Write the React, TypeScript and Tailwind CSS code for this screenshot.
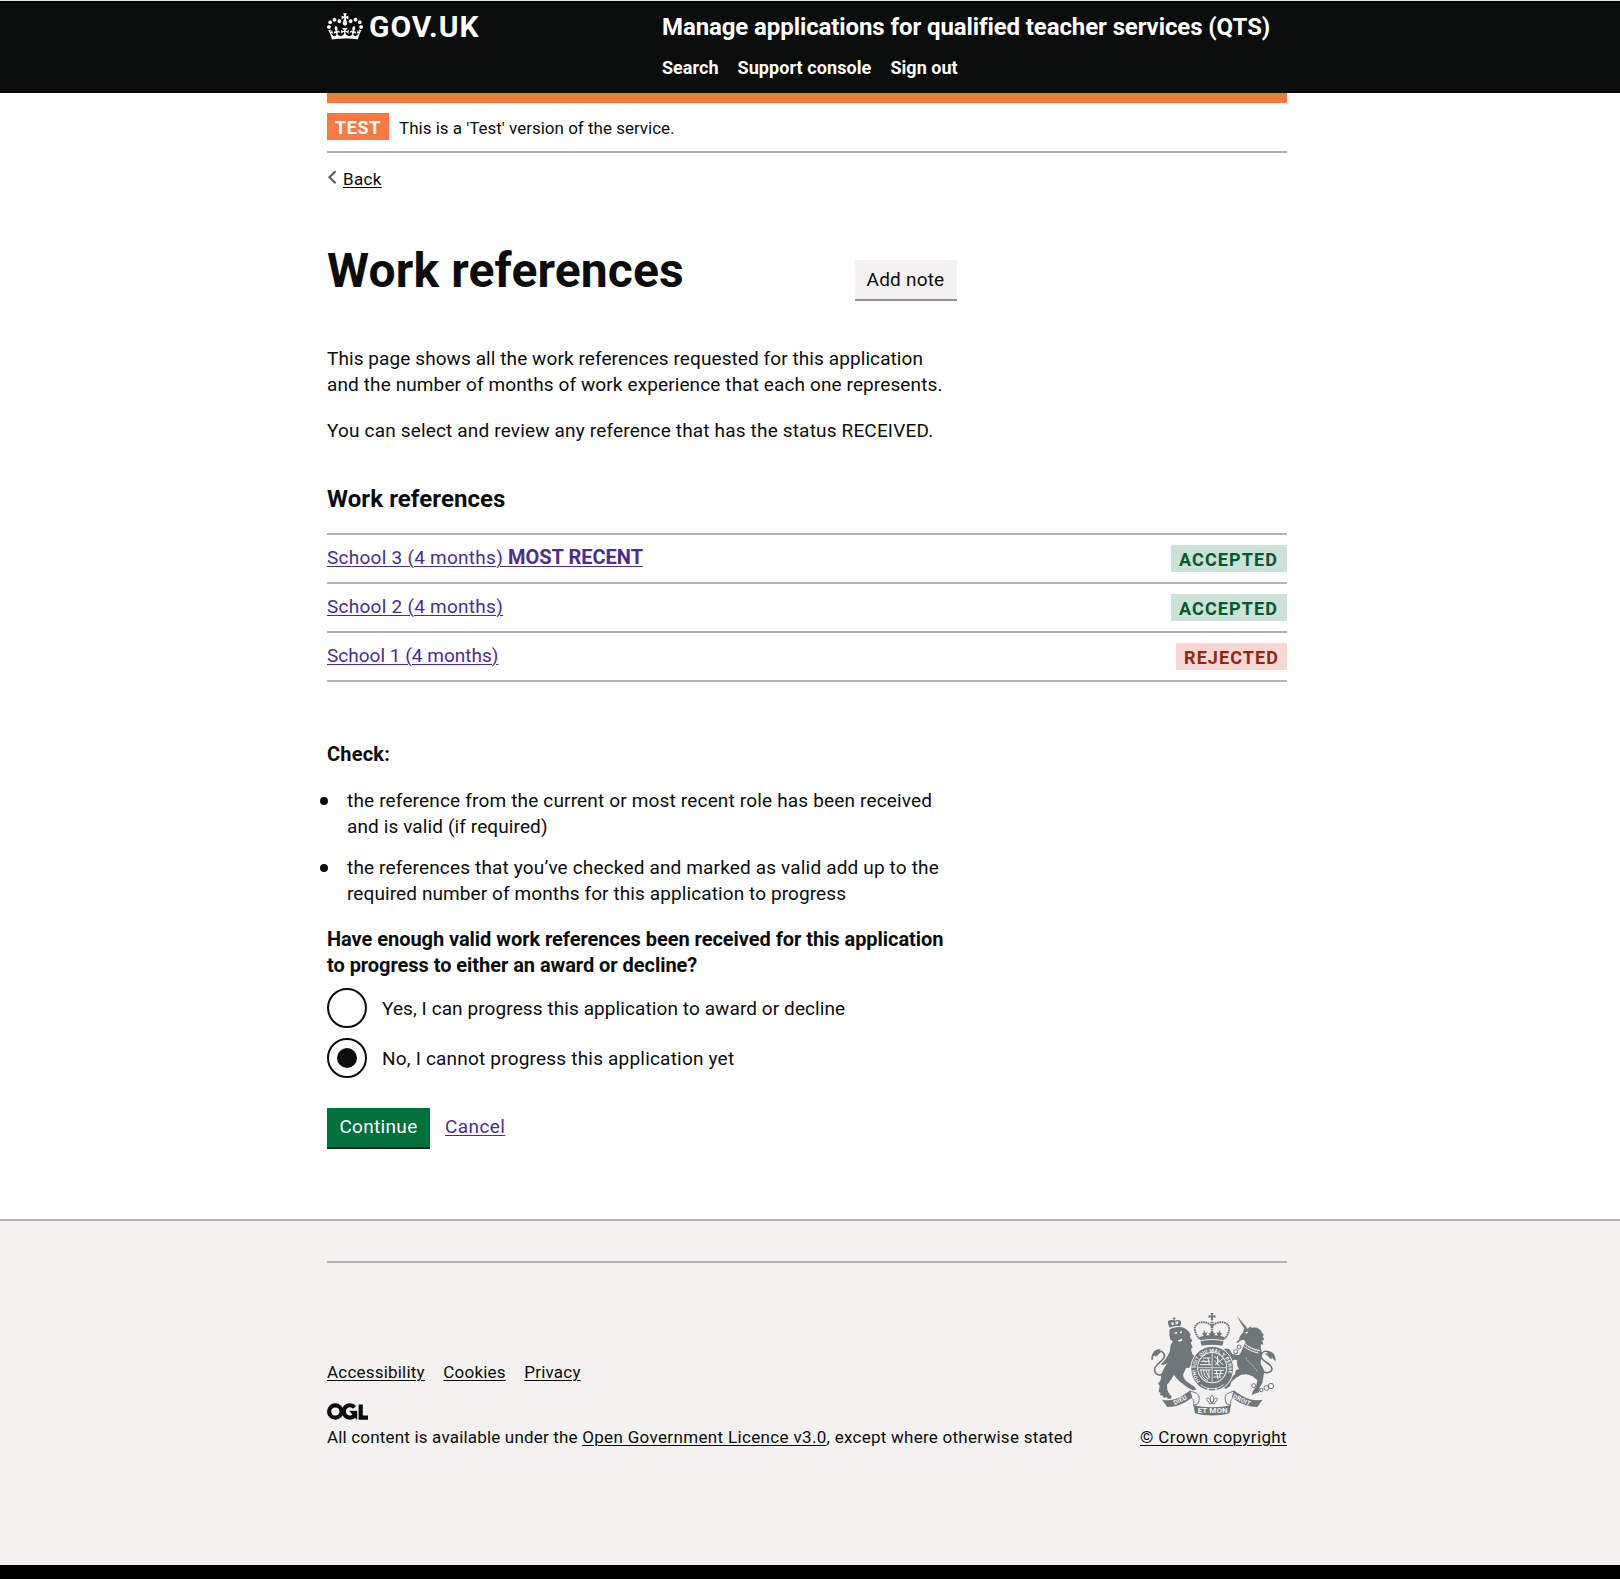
import type { ReactNode } from "react";

const CROWN =
  "M25 30.2c3.5 1.5 7.7-.2 9.1-3.7 1.5-3.6-.2-7.8-3.9-9.2-3.6-1.4-7.6.3-9.1 3.9-1.4 3.5.3 7.5 3.9 9zM9 39.5c3.6 1.5 7.8-.2 9.2-3.7 1.5-3.6-.2-7.8-3.9-9.1-3.6-1.5-7.6.2-9.1 3.8-1.4 3.5.3 7.5 3.8 9zM4.4 57.2c3.5 1.5 7.7-.2 9.1-3.8 1.5-3.6-.2-7.7-3.9-9.1-3.5-1.5-7.6.3-9.1 3.8-1.4 3.5.3 7.6 3.9 9.1zm38.3-21.4c3.5 1.5 7.7-.2 9.1-3.8 1.5-3.6-.2-7.7-3.9-9.1-3.6-1.5-7.6.3-9.1 3.8-1.3 3.6.4 7.7 3.9 9.1zm64.4-5.6c-3.6 1.5-7.8-.2-9.1-3.7-1.5-3.6.2-7.8 3.8-9.2 3.6-1.4 7.7.3 9.2 3.9 1.3 3.5-.4 7.5-3.9 9zm15.9 9.3c-3.6 1.5-7.7-.2-9.1-3.7-1.5-3.6.2-7.8 3.7-9.1 3.6-1.5 7.7.2 9.2 3.8 1.5 3.5-.3 7.5-3.8 9zm4.7 17.7c-3.6 1.5-7.8-.2-9.2-3.8-1.5-3.6.2-7.7 3.9-9.1 3.6-1.5 7.7.3 9.2 3.8 1.3 3.5-.4 7.6-3.9 9.1zM89.3 35.8c-3.6 1.5-7.8-.2-9.2-3.8-1.4-3.6.2-7.7 3.9-9.1 3.6-1.5 7.7.3 9.2 3.8 1.4 3.6-.3 7.7-3.9 9.1zM69.7 17.7l8.9 4.7V9.3l-8.9 2.8c-.2-.3-.5-.6-.9-.9L72.4 0H59.6l3.5 11.2c-.3.3-.6.5-.9.9l-8.8-2.8v13.1l8.8-4.7c.3.3.6.7.9.9l-5 15.4v.1c-.2.8-.4 1.6-.4 2.4 0 4.1 3.1 7.5 7 8.1h.2c.3 0 .7.1 1 .1.4 0 .7 0 1-.1h.2c4-.6 7.1-4.1 7.1-8.1 0-.8-.1-1.7-.4-2.4V34l-5.1-15.4c.4-.2.7-.6 1-.9zM66 92.8c16.9 0 32.8 1.1 47.1 3.2 4-16.9 8.9-26.7 14-33.5l-9.6-3.4c1 4.9 1.1 7.2 0 10.2-1.5-1.4-3-4.3-4.2-8.7L108.6 76c2.8-2 5-3.2 7.5-3.3-4.4 9.4-10 11.9-13.6 11.2-4.3-.8-6.3-4.6-5.6-7.9 1-4.7 5.7-5.9 8-.5 4.3-8.7-3-11.4-7.6-8.8 7.1-7.2 7.9-13.5 2.1-21.1-8 6.1-8.1 12.3-4.5 20.8-4.7-5.4-12.1-2.5-9.5 6.2 3.4-5.2 7.9-2 7.2 3.1-.6 4.3-6.4 7.8-13.5 7.2-10.3-.9-10.9-8-11.2-13.8 2.5-.5 7.1 1.8 11 7.3L80.2 60c-4.1 4.4-8 5.3-12.3 5.4 1.4-4.4 8-11.6 8-11.6H55.5s6.4 7.2 7.9 11.6c-4.2-.1-8-1-12.3-5.4l1.4 16.4c3.9-5.5 8.5-7.7 10.9-7.3-.3 5.8-.9 12.8-11.1 13.8-7.2.6-12.9-2.9-13.5-7.2-.7-5 3.8-8.3 7.1-3.1 2.7-8.7-4.6-11.6-9.4-6.2 3.7-8.5 3.6-14.7-4.6-20.8-5.8 7.6-5 13.9 2.2 21.1-4.7-2.6-11.9.1-7.7 8.8 2.3-5.5 7.1-4.2 8.1.5.7 3.3-1.3 7.1-5.7 7.9-3.5.7-9-1.8-13.5-11.2 2.5.1 4.7 1.3 7.5 3.3l-4.7-15.4c-1.2 4.4-2.7 7.2-4.3 8.7-1.1-3-.9-5.3 0-10.2l-9.5 3.4c5 6.9 9.9 16.7 14 33.5 14.8-2.1 30.8-3.2 47.7-3.2z";

function OglLogo() {
  return (
    <svg className="mt-[21px] block" width="41" height="17" viewBox="0 0 41 17" fill="none" stroke="#0b0c0c">
      <circle cx="8.3" cy="8.5" r="6.2" strokeWidth="4.2" />
      <path d="M27.6 4.4 A6.2 6.2 0 1 0 27.8 12.3" strokeWidth="4.2" />
      <path d="M22.6 8.1 H30 V16.3 H29.6 L22.6 8.1z" fill="#0b0c0c" strokeWidth="0.4" />
      <path d="M33.7 1.4 V14.7 H41" strokeWidth="4.2" />
    </svg>
  );
}

/* Royal coat of arms: lion, crowned garter and unicorn over a motto ribbon. */
function RoyalArms() {
  return (
    <svg
      className="mr-[11px] block self-end"
      width="125"
      height="103"
      viewBox="93 68 375 309"
      fill="#6f777b"
      fontFamily="Roboto, sans-serif"
      fontWeight="700"
    >
      {/* central crown */}
      <path d="M272 68h8l-2 8 8-2v9l-8-2 2 9h-8l2-9-8 2v-9l8 2z" />
      <g fill="none" stroke="#6f777b">
        <path d="M239 146C222 128 218 104 238 97 254 92 270 100 276 108 282 100 298 92 314 97 334 104 330 128 313 146" strokeWidth="6" strokeDasharray="5 2" />
        <path d="M276 94V142" strokeWidth="8" strokeDasharray="5 2" />
      </g>
      <path d="M238 140c26-7 50-7 76 0l-3 10c-24-5-46-5-70 0z" />
      <path d="M252 120l5 8 6-2-4 8 5 8h-16l3-8-6-3 5-3zM300 120l-5 8-6-2 4 8-5 8h16l-3-8 6-3-5-3zM276 122l5 7 6-1-4 7 3 7h-20l3-7-4-7 6 1z" />
      <path d="M241 153c23-5 47-5 70 0l-4 13c-20-4-42-4-62 0z" />

      {/* lion */}
      <path
        fillRule="evenodd"
        d="M150 112c-6-8-8-16-5-20 4-4 9-4 13-2l3-4-3-2 2-3 4 1 3 1-1 3-3 1 2 4c6-3 13-3 17 1 3 5 1 11-2 16-9-2-20-1-30 4zM153 98l3 7 6-2-2-8zM166 94l1 8 7-1 1-8z"
      />
      <path d="M149 117c8-5 25-9 37-6 11 2 20 11 26 21l-2 8 7 11-5 6 6 14-5 6 4 14 9 10 2 9-8-5 4 12-5 1 1 13-7-7-6 9-8-1-9 18c-2 10 4 18 14 26l12 9c7 3 12 8 12 14l-9 1-15-8-16-12c-11-8-20-16-25-26l-5 5c-4 10-12 18-17 24l1 15c3 9 7 14 13 20l-2 7h-10l-4-5-7 3-4-7-8-2 2-6-6-4 3-18-5-6 8-11 2-18c5-13 11-22 18-32l-10 4-10 1c6-8 12-13 17-21l10-18 3-22 7-10-8-5-3-14z" />
      <path d="M162 127l8-2 3 3-6 3zM179 125l7-3-1 6-5 1zM172 149c6 1 10-1 13-5l2 6-8 5z" fill="#f3f2f1" />
      <path d="M136 249C108 264 95 240 111 224 123 212 140 202 131 189 124 179 112 180 108 190" fill="none" stroke="#6f777b" strokeWidth="5" />
      <path d="M94 209c0-20 8-32 28-34l-6 7 13-1c-10 6-15 14-23 19l-1-6-6 6 1 7z" />

      {/* unicorn */}
      <path d="M350 76l30 35-7 4z" />
      <path d="M357 148l2-9 10-13 3-9 8-6 3 5 8-8 4 5c14-4 27 3 31 14l6 7-4 3 5 11-6 2 3 13-7-1-1 12 5 17-3 14c-4 10-2 18 4 26l5 12-3 17-3 18-8 13-2 15c-8 2-14 6-22 8l4-12 9-12 4-20-14-12-18-6-16 1-16 9-14 13-4 13-14 8-5-6 8-13 14-15 12-10 3-12 9-4c-6-10-7-17-5-27l-11-1-9 10-8-1-8 7c-1-7 4-12 10-16l-8-11-1-16-8 2c2-9 12-11 19-6l9 14 21 4 6-12 5-12 8-16-6-7-11 3-6 6-6-1z" />
      <path d="M377 127l6-2-2 4zM374 160c13 11 29 18 46 21M371 168c12 10 26 16 44 20" fill="none" stroke="#f3f2f1" strokeWidth="3" />
      <path d="M378 169l36 14" stroke="#f3f2f1" strokeWidth="3" strokeDasharray="3 4" />
      <path d="M417 238C447 259 468 238 448 223 432 211 415 200 426 188 436 178 450 184 452 194" fill="none" stroke="#6f777b" strokeWidth="5" />
      <path d="M467 213c0-20-7-31-29-31l7 7-13 1c12 4 14 11 22 17l2-6 4 6z" />
      <g fill="none" stroke="#6f777b" strokeWidth="3">
        <circle cx="401" cy="286" r="6" />
        <circle cx="411" cy="300" r="6" />
        <circle cx="439" cy="293" r="7" />
        <circle cx="453" cy="287" r="8" />
        <circle cx="424" cy="299" r="5" />
        <circle cx="357" cy="170" r="6" />
        <circle cx="347" cy="184" r="6" />
      </g>
      <path d="M378 202c6 14 22 20 34 42" fill="none" stroke="#f3f2f1" strokeWidth="2" strokeDasharray="4 3" />

      {/* garter and shield */}
      <ellipse cx="276.5" cy="235" rx="64" ry="67" stroke="#f3f2f1" strokeWidth="3" />
      <ellipse cx="276.5" cy="232" rx="45" ry="47" fill="#f3f2f1" />
      <ellipse cx="276.5" cy="232" rx="42" ry="44" />
      <path d="M276.5 189V276M235 232H318" stroke="#f3f2f1" strokeWidth="3" />
      <path d="M276.5 189V276M235 232H318" stroke="#6f777b" strokeWidth="1" />
      <g fill="none" stroke="#f3f2f1" strokeWidth="3" strokeLinecap="round">
        <path d="M250 203h20M244 213h26M241 223h30M251 209l6 7M264 204l5 20" />
        <path d="M283 240h28M283 250h26M282 260h20M289 242l5 24M303 240l-5 20" />
        <path d="M284 198l25 25M284 212l14 14M308 205l-22 18M293 198v26" />
        <path d="M243 239c0 16 6 26 20 31M251 239c0 14 4 20 14 27M259 239c0 10 4 16 10 22M267 239v24M241 239h29" />
      </g>
      <path id="garter" d="M240 273A49.500 52 0 1 1 313 273" fill="none" />
      <text fill="#f3f2f1" fontSize="15">
        <textPath href="#garter">HONI SOIT QUI MAL Y PENSE</textPath>
      </text>
      <path d="M242 283c20 16 50 16 69 0" fill="none" stroke="#f3f2f1" strokeWidth="2.5" />
      <circle cx="264" cy="296" r="3" fill="#f3f2f1" />
      <circle cx="288" cy="296" r="3" fill="#f3f2f1" />

      {/* motto ribbon */}
      <g fill="#f3f2f1" stroke="#6f777b" strokeWidth="3">
        <path d="M211 302l14 5c14 5 16 16 8 34l-12 4c2-14-2-24-16-25z" />
        <path d="M342 302l-14 5c-14 5-16 16-8 34l12 4c-2-14 2-24 16-25z" />
      </g>
      <path d="M126 328c32 8 60-8 84-28l7 20c-20 18-42 29-75 30z" />
      <path d="M428 328c-32 8-62-8-86-28l-7 20c20 18 44 29 77 30z" />
      <path d="M220 344c35 9 78 9 113 0l-5 25c-32 9-71 9-103 0z" />
      <g fill="none" stroke="#6f777b" strokeWidth="3">
        <path d="M276 314c-7 9-7 14 0 24 7-10 7-15 0-24zM268 336c-10-2-10-14-3-13 5 1 5 7 8 13M284 336c10-2 10-14 3-13-5 1-5 7-8 13M266 340h20" />
      </g>
      <g fill="#f3f2f1">
        <text x="233" y="369" fontSize="24">ET MON</text>
        <text x="164" y="344" fontSize="19" transform="rotate(-25 164 344)">DIEU</text>
        <text x="337" y="323" fontSize="19" transform="rotate(25 337 323)">DROIT</text>
      </g>
    </svg>
  );
}

function Tag({ tone, children }: { tone: "green" | "red"; children: ReactNode }) {
  const colours = tone === "green" ? "bg-[#cce2d8] text-[#005a30] w-[116px]" : "bg-[#f6d7d2] text-[#942514] w-[111px]";
  return (
    <strong className={`mt-[10px] h-[27px] pl-2 pt-px text-[18px] font-bold leading-[27px] tracking-[1.1px] ${colours}`}>
      {children}
    </strong>
  );
}

const references = [
  { school: "School 3 (4 months)", tracking: "tracking-[0.26px]", recent: true, status: "ACCEPTED", tone: "green" as const },
  { school: "School 2 (4 months)", tracking: "tracking-[0.26px]", recent: false, status: "ACCEPTED", tone: "green" as const },
  { school: "School 1 (4 months)", tracking: "tracking-[0.02px]", recent: false, status: "REJECTED", tone: "red" as const },
];

const footerLink = "underline decoration-1 underline-offset-[2px]";

export default function App() {
  return (
    <div className="min-h-[1579px] w-full bg-white font-['Roboto',sans-serif] text-[19px] leading-[26px] text-[#0b0c0c]">
      <header className="h-[93px] border-t border-[#dfe5e2] bg-[#0b0c0c] text-white">
        <div className="h-0.5 bg-black" />
        <div className="ml-[327px] flex w-[960px] pt-[9px]">
          <a href="#" className="flex w-[335px] items-start">
            <svg className="mt-px" width="36" height="27" viewBox="0 0 132 97" fill="currentColor">
              <path fillRule="evenodd" d={CROWN} />
            </svg>
            <span className="ml-[6px] text-[30px] font-bold leading-[30px] tracking-[0.95px]">GOV.UK</span>
          </a>
          <div>
            <a href="#" className="block whitespace-nowrap text-[24px] font-bold leading-[30px] tracking-[-0.1px]">
              Manage applications for qualified teacher services (QTS)
            </a>
            <nav className="mt-[14px] flex gap-[19px] text-[18px] font-bold leading-6 tracking-[0.03px]">
              <a href="#">Search</a>
              <a href="#" className="tracking-[0.08px]">Support console</a>
              <a href="#">Sign out</a>
            </nav>
          </div>
        </div>
      </header>

      <main className="ml-[327px] w-[960px]">
        <div className="flex h-[60px] border-b-2 border-t-[10px] border-b-[#b1b4b6] border-t-[#f77a42] pt-[10px]">
          <strong className="h-[27px] w-[62px] bg-[#f77a42] pl-2 pt-px text-[18px] font-bold leading-[27px] tracking-[0.6px] text-white">
            TEST
          </strong>
          <span className="ml-[10px] pt-[2px] text-[17px] leading-[27px]">This is a 'Test' version of the service.</span>
        </div>

        <a href="#" className="mt-4 flex w-fit text-[17px] leading-5 tracking-[0.35px]">
          <svg className="mt-px" width="16" height="14" viewBox="0 0 16 14" fill="none" stroke="#505a5f" strokeWidth="2">
            <path d="M8.600 1.200 L2.400 7.200 L8.600 13.200" />
          </svg>
          <span className="underline decoration-1 underline-offset-[2px]">Back</span>
        </a>

        <div className="mt-14 flex h-14 w-[630px] justify-between">
          <h1 className="mt-px text-[48px] font-bold leading-[50px] tracking-[0.15px]">Work references</h1>
          <button className="mt-[15px] h-[41px] w-[102px] border-b-2 border-[#929191] bg-[#f3f2f1] pr-px text-[19px] leading-[26px] tracking-[0.2px]">
            Add note
          </button>
        </div>

        <p className="mt-[45px] whitespace-nowrap">
          <span className="tracking-[0.085px]">This page shows all the work references requested for this application</span>
          <br />
          <span className="tracking-[0.115px]">and the number of months of work experience that each one represents.</span>
        </p>
        <p className="mt-5 tracking-[0.17px]">
          You can select and review any reference that has the status RECEIVED.
        </p>

        <h2 className="mt-10 text-[24px] font-bold leading-[30px] tracking-[0.08px]">Work references</h2>

        <ul className="mt-[19px] border-b-2 border-[#b1b4b6]">
          {references.map((r) => (
            <li key={r.school} className="flex h-[49px] justify-between border-t-2 border-[#b1b4b6]">
              <a href="#" className={`mt-[10px] h-[26px] text-[#4c2c92] underline decoration-1 underline-offset-[2px] ${r.tracking}`}>
                {r.school}
                {r.recent && <strong className="text-[20px] font-bold leading-none tracking-[0px]"> MOST RECENT</strong>}
              </a>
              <Tag tone={r.tone}>{r.status}</Tag>
            </li>
          ))}
        </ul>

        <p className="mt-[59px] text-[20px] font-bold tracking-[0.2px]">Check:</p>
        <ul className="mt-[21px] flex flex-col gap-[15px] whitespace-nowrap">
          <li className="flex">
            <span className="-ml-[7px] mt-[9px] mr-[19px] h-2 w-2 rounded-full bg-[#0b0c0c]" />
            <span>
              <span className="tracking-[0.17px]">the reference from the current or most recent role has been received</span>
              <br />
              <span className="tracking-[0.11px]">and is valid (if required)</span>
            </span>
          </li>
          <li className="flex">
            <span className="-ml-[7px] mt-[9px] mr-[19px] h-2 w-2 rounded-full bg-[#0b0c0c]" />
            <span>
              <span className="tracking-[0.16px]">the references that you’ve checked and marked as valid add up to the</span>
              <br />
              <span className="tracking-[0.1px]">required number of months for this application to progress</span>
            </span>
          </li>
        </ul>

        <fieldset>
          <legend className="pt-[19px] text-[20px] font-bold tracking-[-0.045px]">
            Have enough valid work references been received for this application
            <br />
            to progress to either an award or decline?
          </legend>
          <div className="mt-[10px] flex flex-col gap-[10px]">
            <label className="flex h-10">
              <span className="h-10 w-10 rounded-full border-2 border-[#0b0c0c]" />
              <span className="ml-[15px] mt-[8px] tracking-[0.09px]">Yes, I can progress this application to award or decline</span>
            </label>
            <label className="flex h-10">
              <span className="flex h-10 w-10 items-center justify-center rounded-full border-2 border-[#0b0c0c]">
                <span className="h-5 w-5 rounded-full bg-[#0b0c0c]" />
              </span>
              <span className="ml-[15px] mt-[8px] tracking-[0.2px]">No, I cannot progress this application yet</span>
            </label>
          </div>
        </fieldset>

        <div className="mt-[30px] flex h-[41px]">
          <button className="h-[41px] w-[103px] border-b-2 border-[#002d18] bg-[#00703c] pb-px text-[19px] leading-[26px] tracking-[0.32px] text-white">
            Continue
          </button>
          <a href="#" className="ml-[15px] mt-[6px] h-[26px] tracking-[0.4px] text-[#4c2c92] underline decoration-1 underline-offset-[2px]">
            Cancel
          </a>
        </div>
      </main>

      <footer className="mt-[70px] h-[346px] border-t-2 border-[#b1b4b6] bg-[#f3f2f1] pt-10 text-[17px] leading-5">
        <div className="ml-[327px] flex w-[960px] justify-between border-t-2 border-[#b1b4b6]">
          <div className="pt-[99px]">
            <nav className="flex gap-[18.6px] tracking-[0.2px]">
              <a href="#" className={footerLink}>Accessibility</a>
              <a href="#" className={footerLink}>Cookies</a>
              <a href="#" className={footerLink}>Privacy</a>
            </nav>
            <OglLogo />
            <p className="mt-[7px] whitespace-nowrap tracking-[0.18px]">
              All content is available under the{" "}
              <a href="#" className="tracking-[0.34px] underline decoration-1 underline-offset-[2px]">Open Government Licence v3.0</a>
              <span className="tracking-[0.26px]">, except where otherwise stated</span>
            </p>
          </div>
          <a href="#" className="flex flex-col pt-[50px] tracking-[0.37px]">
            <RoyalArms />
            <span className="mt-[11px] underline decoration-1 underline-offset-[2px]">© Crown copyright</span>
          </a>
        </div>
      </footer>
      <div className="h-[14px] bg-black" />
    </div>
  );
}
